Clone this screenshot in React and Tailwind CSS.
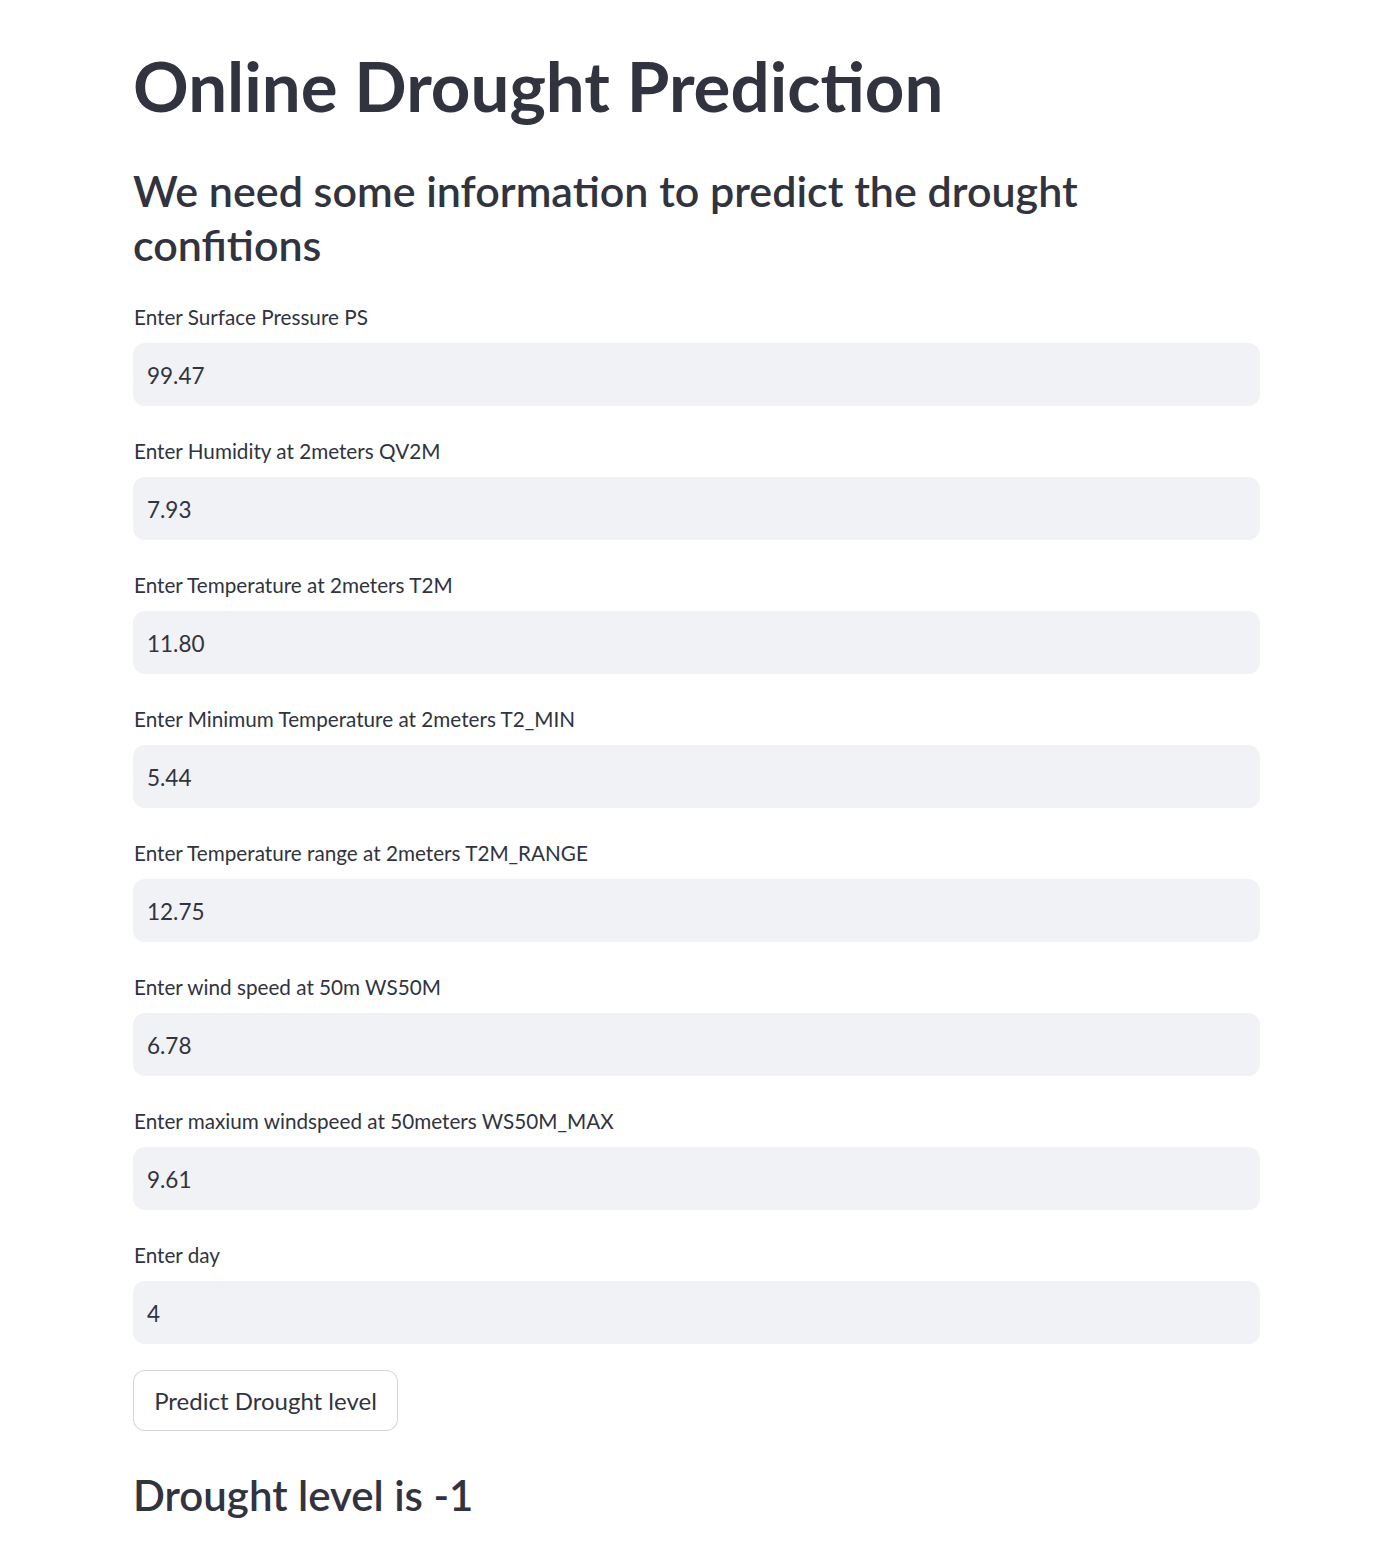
import React from "react";

const fields = [
  ["Enter Surface Pressure PS", "99.47"],
  ["Enter Humidity at 2meters QV2M", "7.93"],
  ["Enter Temperature at 2meters T2M", "11.80"],
  ["Enter Minimum Temperature at 2meters T2_MIN", "5.44"],
  ["Enter Temperature range at 2meters T2M_RANGE", "12.75"],
  ["Enter wind speed at 50m WS50M", "6.78"],
  ["Enter maxium windspeed at 50meters WS50M_MAX", "9.61"],
  ["Enter day", "4"],
];

export default function App() {
  return (
    <div
      className="min-h-[1542px] bg-white text-[#31333F]"
      style={{ fontFamily: "Lato, 'Noto Sans', sans-serif" }}
    >
      <div className="ml-[133px] w-[1127px] pt-[44px]">
        <h1 className="text-[69px] font-bold leading-[84px]">
          Online Drought Prediction
        </h1>
        <h3 className="mt-[36px] text-[43px] font-semibold leading-[54px] w-[960px]">
          We need some information to predict the drought confitions
        </h3>
        <div className="mt-[30px] flex flex-col gap-[30px]">
          {fields.map(([label, value]) => (
            <div key={label} className="flex flex-col">
              <label className="text-[20.7px] leading-[30px] h-[30px] pl-[1px]">{label}</label>
              <div className="mt-[11px] h-[63px] rounded-[12px] bg-[#F0F2F6] flex items-center pl-[14px] pt-[2px] text-[22.5px]">
                {value}
              </div>
            </div>
          ))}
        </div>
        <button className="mt-[26px] h-[61px] w-[265px] rounded-[12px] border border-[rgba(49,51,63,0.2)] bg-white text-[24px] text-[#31333F]">
          Predict Drought level
        </button>
        <h3 className="mt-[37px] text-[42px] font-semibold leading-[54px]">
          Drought level is -1
        </h3>
      </div>
    </div>
  );
}
